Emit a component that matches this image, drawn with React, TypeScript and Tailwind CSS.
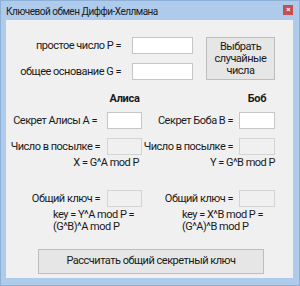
import React from "react";

const font = { fontFamily: 'Roboto, "Noto Sans", sans-serif' };

function Box({ w, disabled }: { w: string; disabled?: boolean }) {
  return (
    <div
      className={
        "h-[17px] shrink-0 border " +
        w +
        (disabled ? " bg-[#f0f0f0] border-[#d4d4d4]" : " bg-white border-[#c6c6c6]")
      }
    />
  );
}

function Field({
  label,
  side,
  disabled,
  extra,
}: {
  label: string;
  side: "l" | "r";
  disabled?: boolean;
  extra?: boolean;
}) {
  return (
    <div
      className={
        (side === "l" ? "w-[136px]" : "w-[133px]") +
        " flex items-center justify-end h-[17px]"
      }
    >
      <span className={"whitespace-nowrap leading-[14px]" + (extra ? " mr-[3px]" : "")}>{label}</span>
      <div className={side === "l" ? "ml-[7px]" : "ml-[6px]"}>
        <Box w={side === "l" ? "w-[35px]" : "w-[36px]"} disabled={disabled} />
      </div>
    </div>
  );
}

export default function App() {
  return (
    <div
      className="w-[300px] h-[286px] bg-[#aecbeb] border border-[#8db0d6] flex flex-col text-[11px] tracking-[-0.5px] text-[#1a1a1a] whitespace-nowrap"
      style={font}
    >
      {/* title bar */}
      <div className="h-[19px] flex items-center justify-between pl-[5px] pr-[6px] pt-[1px]">
        <span className="text-[10px] tracking-[-0.5px] text-[#202020]">Ключевой обмен Диффи-Хеллмана</span>
        <div className="w-[10px] h-[10px] bg-[#c84f4f] flex items-center justify-center mt-[-2px]">
          <span className="text-white text-[8px] leading-none font-bold">×</span>
        </div>
      </div>

      {/* client area */}
      <div className="ml-[5px] w-[287px] h-[258px] bg-[#f0f0f0] pt-[17px]">
        {/* P / G */}
        <div className="flex">
          <div className="grid grid-cols-[115px_61px] gap-x-[11px] gap-y-[9px] items-center">
            <span className="text-right leading-[17px]">простое число P =</span>
            <Box w="w-[61px]" />
            <span className="text-right leading-[17px]">общее основание G =</span>
            <Box w="w-[61px]" />
          </div>
          <button className="ml-[13px] w-[69px] h-[43px] bg-[#e6e6e6] border border-[#bdbdbd] leading-[12px] text-center">
            Выбрать
            <br />
            случайные
            <br />
            числа
          </button>
        </div>

        {/* headers */}
        <div className="flex mt-[12px] h-[14px] leading-[14px] font-bold tracking-[-0.3px]">
          <div className="w-[136px] flex justify-end">
            <span className="w-[35px] text-center">Алиса</span>
          </div>
          <div className="w-[133px] flex justify-end">
            <span className="w-[36px] text-center">Боб</span>
          </div>
        </div>

        {/* secrets */}
        <div className="flex mt-[6px]">
          <Field side="l" label="Секрет Алисы A =" extra />
          <Field side="r" label="Секрет Боба B =" />
        </div>

        {/* sent numbers */}
        <div className="flex mt-[9px]">
          <Field side="l" label="Число в посылке =" disabled />
          <Field side="r" label="Число в посылке =" disabled />
        </div>
        <div className="flex mt-[2px] h-[12px] leading-[12px]">
          <div className="w-[136px] text-right pr-[3px]">X = G^A mod P</div>
          <div className="w-[133px] text-right">Y = G^B mod P</div>
        </div>

        {/* shared key */}
        <div className="flex mt-[21px]">
          <Field side="l" label="Общий ключ =" disabled />
          <Field side="r" label="Общий ключ =" disabled />
        </div>
        <div className="flex mt-[2px] h-[24px] leading-[12px]">
          <div className="w-[136px] pl-[47px]">
            key = Y^A mod P =<br />(G^B)^A mod P
          </div>
          <div className="w-[133px] pl-[40px]">
            key = X^B mod P =<br />(G^A)^B mod P
          </div>
        </div>

        <button className="mt-[16px] ml-[32px] w-[226px] h-[25px] bg-[#e6e6e6] border border-[#bdbdbd] text-center">
          Рассчитать общий секретный ключ
        </button>
      </div>
    </div>
  );
}
